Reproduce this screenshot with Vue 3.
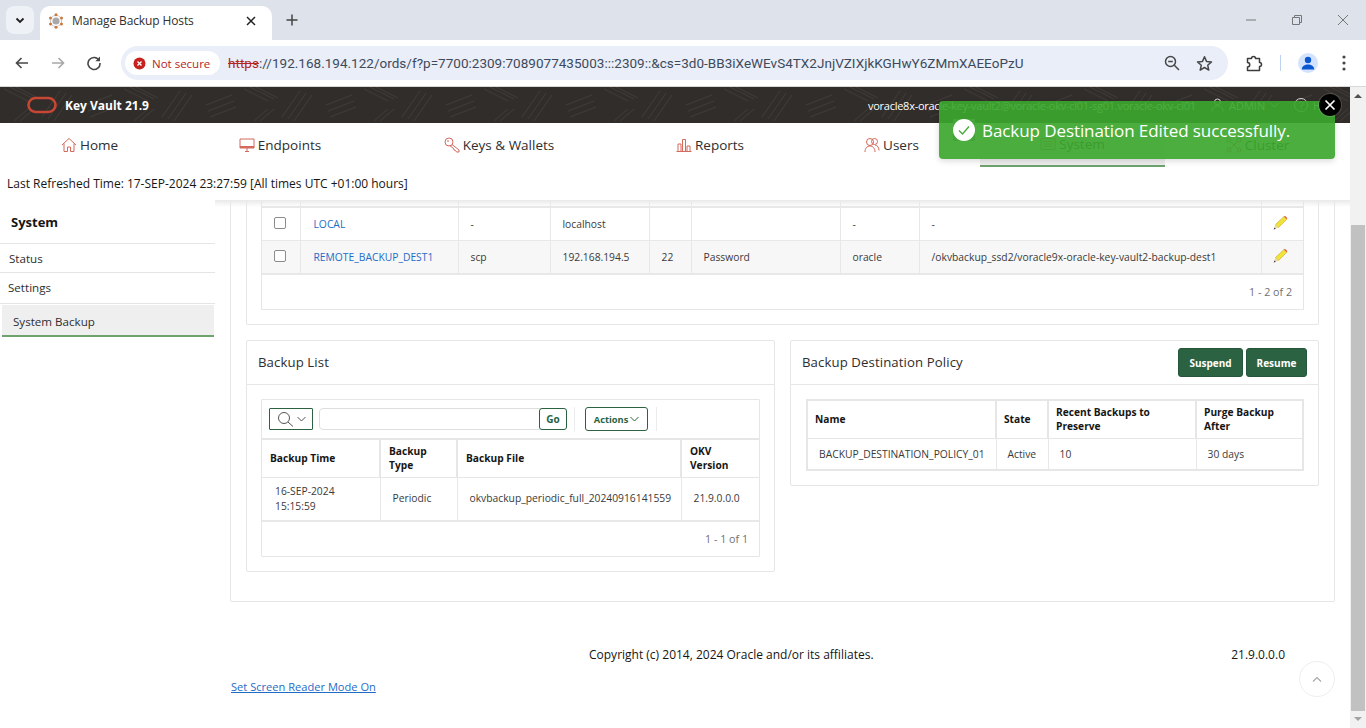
<script setup>
const navItems = [
  { label: 'Home', icon: 'home' },
  { label: 'Endpoints', icon: 'monitor' },
  { label: 'Keys & Wallets', icon: 'key' },
  { label: 'Reports', icon: 'chart' },
  { label: 'Users', icon: 'users' },
  { label: 'System', icon: 'system', active: true },
  { label: 'Cluster', icon: 'cluster' }
]
const hostCols = [38, 158, 92, 99, 42, 149, 79, 342, 42]
const hostRows = [
  { name: 'LOCAL', proto: '-', host: 'localhost', port: '', auth: '', user: '-', path: '-' },
  { name: 'REMOTE_BACKUP_DEST1', proto: 'scp', host: '192.168.194.5', port: '22', auth: 'Password', user: 'oracle', path: '/okvbackup_ssd2/voracle9x-oracle-key-vault2-backup-dest1', alt: true }
]
</script>

<template>
  <div class="page">
    <div class="tabstrip">
      <div class="tablist">
        <svg width="12" height="12" viewBox="0 0 12 12"><path d="M2.5 4.5 6 8l3.500-3.500" fill="none" stroke="#1f1f1f" stroke-width="1.800"/></svg>
      </div>
      <div class="tab">
        <svg class="favicon" width="16" height="16" viewBox="0 0 16 16">
          <circle cx="8" cy="8" r="3.600" fill="#a9a9a9"/>
          <circle cx="8" cy="8" r="5.600" fill="none" stroke="#c9c9c9" stroke-width="1"/>
          <g fill="#c9793f">
            <circle cx="8" cy="1.800" r="1.500"/><circle cx="8" cy="14.200" r="1.500"/>
            <circle cx="2.500" cy="5" r="1.500"/><circle cx="13.500" cy="5" r="1.500"/>
            <circle cx="2.500" cy="11" r="1.500"/><circle cx="13.500" cy="11" r="1.500"/>
          </g>
        </svg>
        <span class="tab-title">Manage Backup Hosts</span>
        <svg class="tab-close" width="10" height="10" viewBox="0 0 10 10"><path d="M1 1l8 8M9 1l-8 8" stroke="#222" stroke-width="1.500"/></svg>
      </div>
      <svg class="newtab" width="12" height="12" viewBox="0 0 12 12"><path d="M6 .5v11M.5 6h11" stroke="#444" stroke-width="1.500"/></svg>
      <div class="winctl">
        <svg width="12" height="12" viewBox="0 0 12 12"><path d="M1 6h10" stroke="#777" stroke-width="1"/></svg>
        <svg width="12" height="12" viewBox="0 0 12 12"><path d="M1.500 3.500h7v7h-7zM3.500 3.500v-2h7v7h-2" fill="none" stroke="#777" stroke-width="1"/></svg>
        <svg width="12" height="12" viewBox="0 0 12 12"><path d="M1 1l10 10M11 1 1 11" stroke="#777" stroke-width="1"/></svg>
      </div>
    </div>

    <div class="toolbar">
      <svg class="tool" width="16" height="16" viewBox="0 0 16 16"><path d="M14 8H3M7.500 3 2.500 8l5 5" fill="none" stroke="#474747" stroke-width="1.600"/></svg>
      <svg class="tool" width="16" height="16" viewBox="0 0 16 16"><path d="M2 8h11M8.500 3l5 5-5 5" fill="none" stroke="#a8a8a8" stroke-width="1.600"/></svg>
      <svg class="tool" width="16" height="16" viewBox="0 0 16 16"><path d="M13.200 5.500A6 6 0 1 0 14 8" fill="none" stroke="#474747" stroke-width="1.600"/><path d="M14 1.500v4.700H9.300z" fill="#474747"/></svg>
      <div class="omnibox">
        <div class="chip">
          <svg width="13" height="13" viewBox="0 0 13 13"><circle cx="6.500" cy="6.500" r="6" fill="#c5221f"/><path d="M4.500 4.500l4 4M8.500 4.500l-4 4" stroke="#fff" stroke-width="1.300"/></svg>
          <span>Not secure</span>
        </div>
        <div class="url"><span class="scheme">https</span>://192.168.194.122/ords/f?p=7700:2309:7089077435003:::2309::&amp;cs=3d0-BB3iXeWEvS4TX2JnjVZIXjkKGHwY6ZMmXAEEoPzU</div>
        <svg class="omni-icon" width="16" height="16" viewBox="0 0 16 16"><circle cx="6.500" cy="6.500" r="5" fill="none" stroke="#474747" stroke-width="1.500"/><path d="M4.200 6.500h4.600M10.300 10.300 15 15" stroke="#474747" stroke-width="1.500"/></svg>
        <svg class="omni-star" width="17" height="17" viewBox="0 0 17 17"><path d="M8.500 1.800l2 4.600 5 .5-3.800 3.300 1.100 4.900-4.300-2.600-4.300 2.600 1.100-4.900L1.500 6.900l5-.5z" fill="none" stroke="#474747" stroke-width="1.500" stroke-linejoin="round"/></svg>
      </div>
      <svg class="ext" width="17" height="17" viewBox="0 0 17 17"><path d="M1.500 3.500h4a2 2 0 0 1 4 0h4v4a2 2 0 0 1 0 4v4h-12v-3.500a2.200 2.200 0 0 0 0-4.500z" fill="none" stroke="#3c3c3c" stroke-width="1.500" stroke-linejoin="round"/></svg>
      <div class="tool-sep"></div>
      <div class="avatar">
        <svg width="14" height="14" viewBox="0 0 14 14"><circle cx="7" cy="4" r="3.200" fill="#0b57d0"/><path d="M.8 13.500c0-3.500 3-5 6.200-5s6.200 1.500 6.200 5z" fill="#0b57d0"/></svg>
      </div>
      <svg class="menu" width="4" height="16" viewBox="0 0 4 16"><circle cx="2" cy="2" r="1.600" fill="#474747"/><circle cx="2" cy="8" r="1.600" fill="#474747"/><circle cx="2" cy="14" r="1.600" fill="#474747"/></svg>
    </div>

    <div class="viewport">
      <div class="site">
        <header class="masthead">
          <svg class="hatch" width="100%" height="36">
            <defs>
              <pattern id="hatchp" width="120" height="36" patternUnits="userSpaceOnUse">
                <path d="M4 2l24 12M10 0l24 12M16 0l22 11M60 4 42 30M66 6 48 32M72 8 54 34M90 30l26-10M88 24l26-10M86 18l26-10M20 34l14-12M14 34l14-12" stroke="#413c38" stroke-width="1" fill="none"/>
              </pattern>
            </defs>
            <rect width="100%" height="36" fill="url(#hatchp)"/>
          </svg>
          <div class="brand">
            <svg width="30" height="18" viewBox="0 0 30 18"><rect x="1.500" y="2" width="27" height="14" rx="7" fill="none" stroke="#c74634" stroke-width="2.600"/></svg>
            <b>Key Vault 21.9</b>
          </div>
          <div class="usr">
            <span class="usr-host">voracle8x-oracle-key-vault2@voracle-okv-cl01-sg01.voracle-okv-cl01</span>
            <span class="usr-name">
              <svg width="13" height="14" viewBox="0 0 13 14"><circle cx="6.500" cy="4" r="3" fill="none" stroke="#ddd"/><path d="M1 13.500c0-4 2.500-5.500 5.500-5.500s5.500 1.500 5.500 5.500" fill="none" stroke="#ddd"/></svg>
              ADMIN
              <svg width="9" height="6" viewBox="0 0 9 6"><path d="M.5 1l4 4 4-4" fill="none" stroke="#ddd"/></svg>
            </span>
            <span class="usr-help">
              <svg width="14" height="14" viewBox="0 0 14 14"><circle cx="7" cy="7" r="6.500" fill="none" stroke="#ddd"/><path d="M5 5.500a2 2 0 1 1 3 1.800c-.7.400-1 .8-1 1.700M7 10v1.200" fill="none" stroke="#ddd"/></svg>
              Help
            </span>
          </div>
        </header>

        <nav class="mainnav">
          <a v-for="n in navItems" :key="n.label" class="navitem" :class="{ active: n.active }">
            <svg width="16" height="16" viewBox="0 0 16 16" fill="none" stroke="#d4695c" stroke-width="1">
              <template v-if="n.icon === 'home'"><path d="M1 8l7-6.500L15 8M3 6.500V14.500h3.500V10h3v4.500H13V6.500"/></template>
              <template v-else-if="n.icon === 'monitor'"><path d="M1 2h14v9H1zM6 14.500h4M8 11v3.500"/><path d="M1 10h14" stroke-width="2"/></template>
              <template v-else-if="n.icon === 'key'"><circle cx="5" cy="5" r="4"/><path d="M8 7.500l7 5.500v2h-2.500l-1-1.500-1.500-.5-.5-1.500-3.800-3M3 4h2"/></template>
              <template v-else-if="n.icon === 'chart'"><path d="M.5 14.500h15M2 14.500V7h3v7.500M6.500 14.500V2.500h3v12M11 14.500V9h3v5.500"/></template>
              <template v-else-if="n.icon === 'users'"><circle cx="6" cy="5" r="3.500"/><circle cx="10.500" cy="4.500" r="3"/><path d="M1 15c0-3.500 2-6 5-6s5 2.500 5 6M11 8c2.500.2 4 2.500 4 5.500"/></template>
              <template v-else-if="n.icon === 'system'"><path d="M1 2.500h14v11H1zM3.500 5.500h9M3.500 8h9M3.500 10.500h9"/></template>
              <template v-else><circle cx="3" cy="3" r="2"/><circle cx="13" cy="3" r="2"/><circle cx="3" cy="13" r="2"/><circle cx="13" cy="13" r="2"/><path d="M4.500 4.500l7 7M11.500 4.500l-7 7"/></template>
            </svg>
            <span>{{ n.label }}</span>
          </a>
        </nav>

        <div class="refreshed">Last Refreshed Time: 17-SEP-2024 23:27:59 [All times UTC +01:00 hours]</div>

        <div class="content">
          <aside class="sidebar">
            <h2>System</h2>
            <a class="side-status">Status</a>
            <a class="side-settings">Settings</a>
            <a class="side-backup">System Backup</a>
          </aside>

          <main class="main">
            <section class="region">
              <div class="card hosts">
                <div class="report">
                  <table class="grid hostgrid">
                    <colgroup><col v-for="(c, i) in hostCols" :key="i" :style="{ width: c + 'px' }"></colgroup>
                    <tbody>
                      <tr class="stub"><td v-for="i in 9" :key="i"></td></tr>
                      <tr v-for="r in hostRows" :key="r.name" :class="{ alt: r.alt }">
                        <td class="chk"><span class="checkbox"></span></td>
                        <td class="link">{{ r.name }}</td>
                        <td>{{ r.proto }}</td>
                        <td>{{ r.host }}</td>
                        <td>{{ r.port }}</td>
                        <td>{{ r.auth }}</td>
                        <td>{{ r.user }}</td>
                        <td>{{ r.path }}</td>
                        <td class="edit">
                          <svg width="16" height="16" viewBox="0 0 16 16">
                            <path d="M3.500 9.500 12 1.500l2.800 2.800-8.300 8.200z" fill="#f2e23c" stroke="#c9b52a" stroke-width=".7"/>
                            <path d="M12 1.500l1-.8 2.300 2.300-.6 1.300z" fill="#e8593a"/>
                            <path d="M3.500 9.500l3 3-4.800 2z" fill="#e8d9a8"/>
                            <path d="M1.700 14.500l.8-2.100 1.300 1.300z" fill="#333"/>
                          </svg>
                        </td>
                      </tr>
                    </tbody>
                  </table>
                  <div class="pager host-pager">1 - 2 of 2</div>
                </div>
              </div>

              <div class="lower">
                <div class="card list-card">
                  <div class="card-head"><h3>Backup List</h3></div>
                  <div class="report list-report">
                    <div class="ir-bar">
                      <button class="ir-search">
                        <svg width="17" height="16" viewBox="0 0 17 16"><circle cx="7" cy="7" r="5.500" fill="none" stroke="#555"/><path d="M11 11l5 4.500" stroke="#555"/></svg>
                        <svg width="9" height="6" viewBox="0 0 9 6"><path d="M.5 1l4 4 4-4" fill="none" stroke="#555"/></svg>
                      </button>
                      <div class="ir-input"><button class="ir-go">Go</button></div>
                      <span class="ir-sep"></span>
                      <button class="ir-actions">Actions
                        <svg width="9" height="6" viewBox="0 0 9 6"><path d="M.5 1l4 4 4-4" fill="none" stroke="#2b6242"/></svg>
                      </button>
                      <span class="ir-sep"></span>
                    </div>
                    <table class="grid listgrid">
                      <colgroup><col style="width:118px"><col style="width:77px"><col style="width:224px"><col></colgroup>
                      <thead><tr><th>Backup Time</th><th>Backup<br>Type</th><th>Backup File</th><th>OKV<br>Version</th></tr></thead>
                      <tbody><tr><td>16-SEP-2024<br>15:15:59</td><td>Periodic</td><td>okvbackup_periodic_full_20240916141559</td><td>21.9.0.0.0</td></tr></tbody>
                    </table>
                    <div class="pager list-pager">1 - 1 of 1</div>
                  </div>
                </div>

                <div class="card policy-card">
                  <div class="card-head">
                    <h3>Backup Destination Policy</h3>
                    <div class="head-btns"><button class="btn">Suspend</button><button class="btn">Resume</button></div>
                  </div>
                  <table class="grid policygrid">
                    <colgroup><col style="width:189px"><col style="width:52px"><col style="width:148px"><col></colgroup>
                    <thead><tr><th>Name</th><th>State</th><th>Recent Backups to<br>Preserve</th><th>Purge Backup<br>After</th></tr></thead>
                    <tbody><tr><td>BACKUP_DESTINATION_POLICY_01</td><td>Active</td><td>10</td><td>30 days</td></tr></tbody>
                  </table>
                </div>
              </div>
            </section>

            <footer class="foot">
              <span class="copy">Copyright (c) 2014, 2024 Oracle and/or its affiliates.</span>
              <span class="ver">21.9.0.0.0</span>
            </footer>
            <a class="reader">Set Screen Reader Mode On</a>
            <div class="totop">
              <svg width="10" height="6" viewBox="0 0 10 6"><path d="M1 5.500 5 1.500l4 4" fill="none" stroke="#a8a8a8" stroke-width="1.200"/></svg>
            </div>
          </main>
        </div>
      </div>

      <div class="scrollbar">
        <svg class="sb-arrow" width="16" height="17" viewBox="0 0 16 17"><path d="M4 11l4-4 4 4z" fill="#505050"/></svg>
        <div class="sb-space"></div>
        <div class="sb-thumb"></div>
        <svg class="sb-arrow" width="16" height="17" viewBox="0 0 16 17"><path d="M4 6l4 4 4-4z" fill="#a3a3a3"/></svg>
      </div>
    </div>

    <div class="toast">
      <span class="toast-icon">
        <svg width="22" height="22" viewBox="0 0 22 22"><circle cx="11" cy="11" r="11" fill="#fff"/><path d="M6 11.500l3.500 3.500L16 7.500" fill="none" stroke="#46a83a" stroke-width="1.300"/></svg>
      </span>
      <span class="toast-text">Backup Destination Edited successfully.</span>
      <span class="toast-close">
        <svg width="12" height="12" viewBox="0 0 12 12"><path d="M1.500 1.500l9 9M10.500 1.500l-9 9" stroke="#fff" stroke-width="1.700"/></svg>
      </span>
    </div>
  </div>
</template>

<style scoped>
.page { position: relative; width: 1366px; height: 728px; overflow: hidden; font-family: "Open Sans", "Noto Sans", sans-serif; color: #161513; background: #fff; }
svg { display: block; flex: none; }
button { font-family: inherit; cursor: default; }

.tabstrip { height: 40px; background: #dee3eb; display: flex; align-items: flex-start; padding: 6px 0 0 6px; box-sizing: border-box; position: relative; }
.tablist { width: 28px; height: 28px; background: #eef1f6; border-radius: 8px; display: flex; align-items: center; justify-content: center; }
.tab { width: 232px; height: 34px; margin-left: 6px; background: #fff; border-radius: 10px 10px 0 0; display: flex; align-items: center; padding: 0 16px 5px 8px; box-sizing: border-box; }
.favicon { margin-right: 8px; }
.tab-title { flex: 1; font: 12px/16px "Open Sans", sans-serif; letter-spacing: -.12px; color: #303030; white-space: nowrap; }
.newtab { margin: 8px 0 0 14px; }
.winctl { margin-left: auto; display: flex; gap: 34px; padding: 8px 17px 0 0; }

.toolbar { height: 47px; background: #fff; display: flex; align-items: center; padding-left: 14px; box-sizing: border-box; border-bottom: 1px solid #d8d8d8; }
.tool { margin-right: 20px; }
.omnibox { width: 1107px; height: 34px; margin-left: -1px; background: #e9eef8; border-radius: 17px; display: flex; align-items: center; padding-left: 4px; box-sizing: border-box; }
.chip { width: 95px; height: 24px; background: #fff; border-radius: 12px; display: flex; align-items: center; gap: 6px; padding-left: 8px; box-sizing: border-box; font: 11.500px "Open Sans", sans-serif; color: #b3261e; white-space: nowrap; }
.url { margin-left: 8px; width: 815px; font: 13.500px/20px Roboto, sans-serif; letter-spacing: .02px; color: #3e4a5b; white-space: nowrap; }
.scheme { color: #b3261e; text-decoration: line-through; }
.omni-icon { margin-left: 121px; }
.omni-star { margin-left: 16px; }
.ext { margin-left: 18px; }
.tool-sep { width: 1px; height: 16px; background: #bcd2ee; margin-left: 17px; }
.avatar { width: 20px; height: 20px; border-radius: 50%; background: #d3e3fd; margin-left: 17px; display: flex; align-items: center; justify-content: center; }
.menu { margin-left: 24px; }

.viewport { display: flex; height: 641px; }
.site { width: 1350px; display: flex; flex-direction: column; }
.masthead { position: relative; height: 36px; background: #312d2a; display: flex; align-items: center; justify-content: space-between; padding: 0 0 0 27px; box-sizing: border-box; color: #fff; }
.hatch { position: absolute; inset: 0; }
.brand { position: relative; display: flex; align-items: center; gap: 8px; font-size: 12px; }
.brand b { font-weight: 700; }
.usr { position: relative; display: flex; align-items: center; font-size: 11px; white-space: nowrap; width: 482px; }
.usr-host { width: 343px; letter-spacing: -.26px; }
.usr-name { display: flex; align-items: center; gap: 5px; width: 83px; }
.usr-help { display: flex; align-items: center; gap: 5px; }

.mainnav { display: grid; grid-template-columns: 179px 202px 236px 186px 177px 185px 185px; height: 45px; }
.navitem { display: flex; align-items: center; justify-content: center; gap: 3px; font-size: 13.500px; color: #2e2e2e; height: 44px; box-sizing: border-box; }
.navitem.active { background: #efefef; border-bottom: 2px solid #6ea36e; }
.refreshed { height: 32px; display: flex; align-items: center; padding: 0 0 1px 7px; box-sizing: border-box; font-size: 12px; color: #161513; }

.content { flex: 1; min-height: 0; display: flex; }
.sidebar { width: 215px; flex: none; font-size: 11.600px; color: #2e2e2e; display: flex; flex-direction: column; position: relative; z-index: 1; background: #fff; }
.sidebar h2 { margin: 0; font-size: 13px; font-weight: 700; color: #161513; height: 44px; display: flex; align-items: center; padding-left: 11px; box-sizing: border-box; border-bottom: 1px solid #e5e5e5; }
.sidebar a { display: flex; align-items: center; box-sizing: border-box; }
.side-status { height: 29px; padding-left: 9px; border-bottom: 1px solid #e5e5e5; }
.side-settings { height: 31px; padding: 0 0 1px 8px; border-bottom: 1px solid #e5e5e5; }
.side-backup { height: 32px; margin: 1px 1px 0 2px; padding: 3px 0 0 11px; background: #efefef; border-bottom: 2px solid #6ea36e; }

.main { flex: 1; position: relative; min-width: 0; overflow: hidden; }
.main::before { content: ""; position: absolute; left: 0; right: 0; top: 0; height: 7px; background: linear-gradient(#e9e9e9, rgba(255,255,255,0)); z-index: 1; }
.region { margin: 0 15px; border: 1px solid #e6e6e6; border-top: 0; padding: 0 15px 29px; border-radius: 0 0 2px 2px; }
.card { border: 1px solid #e6e6e6; border-radius: 2px; background: #fff; box-sizing: border-box; }
.hosts { border-top: 0; padding: 0 14px 14px; }
.report { border: 1px solid #e6e6e6; border-radius: 1px; }
.hosts .report { border-top: 0; }

.grid { border-collapse: collapse; table-layout: fixed; width: 100%; font-size: 10.300px; color: #3a3a3a; }
.grid td, .grid th { border: 1px solid #e8e8e8; }
.grid tr > :first-child { border-left: 0; }
.hostgrid td { height: 33px; padding: 0 12px; box-sizing: border-box; white-space: nowrap; }
.hostgrid .stub td { height: 7px; padding: 0; border-top: 0; border-bottom-width: 2px; }
.hostgrid tr:last-child td { height: 34px; border-bottom: 2px solid #e8e8e8; }
.hostgrid tr.alt td { background: #f7f7f7; }
.hostgrid td:last-child, .listgrid tr > :last-child, .policygrid tr > :last-child { border-right: 0; }
.hostgrid .link { padding-left: 13px; }
.chk { padding: 0 !important; }
.checkbox { display: block; width: 10px; height: 10px; margin: -2px 0 0 12px; border: 1px solid #8c8c8c; border-radius: 2px; background: #fff; }
.link { color: #1f6cc7; }
.edit { padding: 0 !important; }
.edit svg { margin: -2px 0 0 10px; }
.pager { display: flex; align-items: center; justify-content: flex-end; padding-right: 11px; font-size: 10.700px; color: #707070; }
.host-pager { height: 34px; }
.list-pager { height: 34px; }

.lower { display: grid; grid-template-columns: 529px 529px; column-gap: 15px; margin-top: 15px; align-items: start; }
.card-head { height: 44px; border-bottom: 1px solid #e6e6e6; display: flex; align-items: center; justify-content: space-between; padding: 0 11px; box-sizing: border-box; }
.card-head h3 { margin: 0 0 1px; font-size: 13.200px; font-weight: 400; color: #2e2e2e; letter-spacing: .1px; }
.head-btns { display: flex; gap: 3px; }
.btn { height: 29px; padding: 0; background: #2b6242; color: #fff; border: 1px solid #25553a; border-radius: 3px; font-size: 10px; font-weight: 700; }
.btn:first-child { width: 65px; }
.btn:last-child { width: 61px; }

.list-card { padding-bottom: 14px; }
.list-report { margin: 14px 14px 0; }
.ir-bar { height: 38px; display: flex; align-items: center; padding-left: 7px; box-sizing: border-box; }
.ir-search { width: 44px; height: 22px; background: #fff; border: 1px solid #2b6242; border-radius: 1px; display: flex; align-items: center; justify-content: center; gap: 3px; padding: 0; margin-top: -1px; }
.ir-input { width: 248px; height: 22px; margin: -1px 0 0 6px; border: 1px solid #dedede; border-radius: 4px; box-sizing: border-box; display: flex; justify-content: flex-end; }
.ir-go { width: 28px; height: 22px; margin: -1px -1px 0 0; background: #fff; border: 1px solid #2b6242; border-radius: 3px; color: #2b6242; font-size: 10px; font-weight: 700; padding: 0; }
.ir-sep { width: 1px; height: 24px; background: #ececec; margin-left: 7px; }
.ir-actions { height: 24px; width: 63px; margin-left: 10px; margin-right: 8px; background: #fff; border: 1px solid #2b6242; border-radius: 3px; color: #2b6242; font-size: 9.300px; font-weight: 700; display: flex; align-items: center; justify-content: center; gap: 2px; padding: 0; }
.ir-sep:last-child { margin-left: 0; }
.listgrid th, .listgrid td, .policygrid th, .policygrid td { box-sizing: border-box; }
.grid th { font-weight: 700; color: #161513; text-align: left; font-size: 10.200px; line-height: 14px; padding: 0 8px; background: #fff; border-width: 2px 2px 1px 1px; border-color: #e6e6e6; }
.listgrid th { height: 38px; }
.listgrid td { height: 44px; padding: 0 12px; line-height: 15px; border-bottom-width: 2px; white-space: nowrap; }
.listgrid tr td:first-child { padding-left: 13px; }

.policy-card { padding-bottom: 14px; }
.policygrid { width: 498px; margin: 14px 15px 0; border: 2px solid #e6e6e6; border-top: 0; }
.policygrid th { height: 38px; padding-left: 7px; }
.policygrid tr > :first-child { border-left: 0; }
.policygrid td { height: 32px; padding: 0 11px; white-space: nowrap; }

.foot { display: flex; margin-top: 45px; font-size: 12px; line-height: 16px; color: #161513; }
.copy { margin-left: 374px; }
.ver { margin-left: auto; margin-right: 65px; }
.reader { display: inline-block; margin: 16px 0 0 16px; font-size: 11.100px; line-height: 15px; color: #1f6cc7; text-decoration: underline; }
.totop { position: absolute; left: 1084px; top: 461px; width: 34px; height: 34px; border: 1px solid #eeeeee; border-radius: 50%; display: flex; align-items: center; justify-content: center; background: #fff; }

.scrollbar { width: 16px; background: #f1f1f1; display: flex; flex-direction: column; }
.sb-space { height: 121px; }
.sb-thumb { flex: 1; margin: 0 1px; background: #c1c1c1; }

.toast { position: absolute; left: 939px; top: 101px; width: 396px; height: 58px; background: rgba(59,166,45,.913); border-radius: 4px; box-shadow: 0 2px 6px rgba(0,0,0,.15); display: flex; align-items: center; padding-left: 14px; box-sizing: border-box; color: #fff; }
.toast-icon { width: 22px; height: 22px; background: #44a638; margin-top: -1px; }
.toast-text { margin-left: 7px; font-size: 17px; letter-spacing: -.08px; white-space: nowrap; }
.toast-close { position: absolute; right: -6px; top: -7px; width: 22px; height: 22px; background: #000; border-radius: 50%; display: flex; align-items: center; justify-content: center; box-shadow: 0 0 0 1px rgba(255,255,255,.15); }
</style>
